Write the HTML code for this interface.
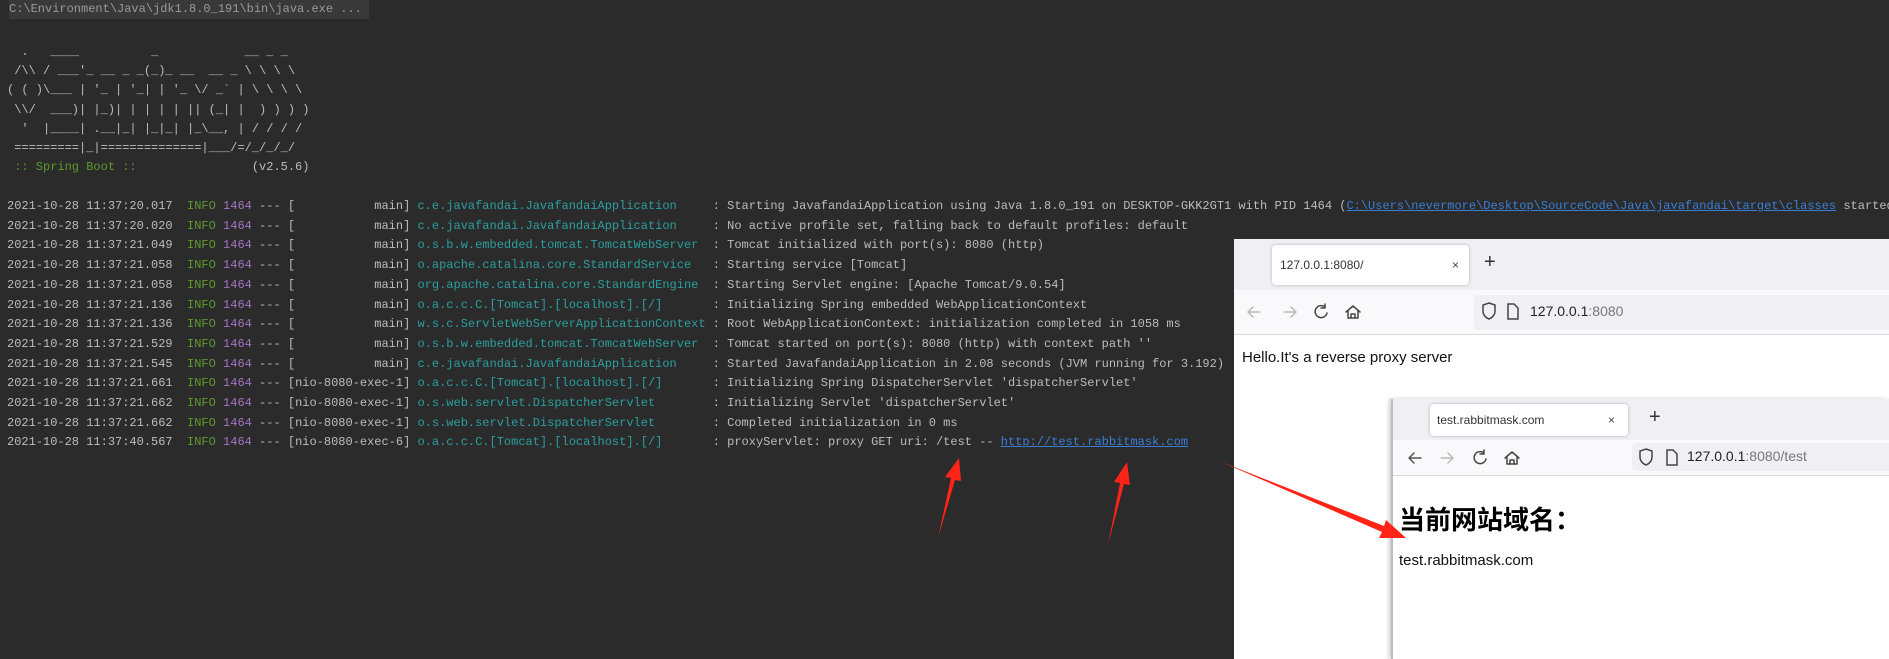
<!DOCTYPE html>
<html><head><meta charset="utf-8">
<style>
*{margin:0;padding:0;box-sizing:border-box}
body{width:1889px;height:659px;background:#2b2b2b;position:relative;overflow:hidden;font-family:"Liberation Mono",monospace;font-size:12px;color:#bcbcbc}
.hdr{position:absolute;left:9px;top:0;width:360px;height:19px;background:#393939;color:#9a9a9a;line-height:19px;white-space:nowrap;overflow:hidden}
pre{font-family:"Liberation Mono",monospace;font-size:12px;white-space:pre;position:absolute}
.ban{left:7px;top:43px;line-height:19.2px;color:#bcbcbc}
.log{left:7px;top:197px;line-height:19.7px;color:#bcbcbc}
.g{color:#5e9a2c}.p{color:#a673c4}.c{color:#2b9f9f}.sb{color:#5e9a2c}
.lk{color:#3a7fd6;text-decoration:underline}
.win{position:absolute;background:#fff;font-family:"Liberation Sans",sans-serif}
.tabbar{position:absolute;left:0;right:0;top:0;background:#f0f0f4}
.tab{position:absolute;background:#fff;border-radius:4px;box-shadow:0 0 3px rgba(0,0,0,.25);font-size:12px;color:#333}
.nav{position:absolute;left:0;right:0;background:#f9f9fb;border-bottom:1px solid #d8d8d8}
.url{position:absolute;right:0;background:#f0f0f4;border-radius:4px 0 0 4px}
.ic{position:absolute}
</style></head><body>
<div class="hdr">C:\Environment\Java\jdk1.8.0_191\bin\java.exe ...</div>
<pre class="ban">  .   ____          _            __ _ _
 /\\ / ___'_ __ _ _(_)_ __  __ _ \ \ \ \
( ( )\___ | '_ | '_| | '_ \/ _` | \ \ \ \
 \\/  ___)| |_)| | | | | || (_| |  ) ) ) )
  '  |____| .__|_| |_|_| |_\__, | / / / /
 =========|_|==============|___/=/_/_/_/
<span class="sb"> :: Spring Boot :: </span>               (v2.5.6)</pre>
<pre class="log">2021-10-28 11:37:20.017  <span class="g">INFO</span> <span class="p">1464</span> --- [           main] <span class="c">c.e.javafandai.JavafandaiApplication    </span> : Starting JavafandaiApplication using Java 1.8.0_191 on DESKTOP-GKK2GT1 with PID 1464 (<span class="lk">C:\Users\nevermore\Desktop\SourceCode\Java\javafandai\target\classes</span> started
2021-10-28 11:37:20.020  <span class="g">INFO</span> <span class="p">1464</span> --- [           main] <span class="c">c.e.javafandai.JavafandaiApplication    </span> : No active profile set, falling back to default profiles: default
2021-10-28 11:37:21.049  <span class="g">INFO</span> <span class="p">1464</span> --- [           main] <span class="c">o.s.b.w.embedded.tomcat.TomcatWebServer </span> : Tomcat initialized with port(s): 8080 (http)
2021-10-28 11:37:21.058  <span class="g">INFO</span> <span class="p">1464</span> --- [           main] <span class="c">o.apache.catalina.core.StandardService  </span> : Starting service [Tomcat]
2021-10-28 11:37:21.058  <span class="g">INFO</span> <span class="p">1464</span> --- [           main] <span class="c">org.apache.catalina.core.StandardEngine </span> : Starting Servlet engine: [Apache Tomcat/9.0.54]
2021-10-28 11:37:21.136  <span class="g">INFO</span> <span class="p">1464</span> --- [           main] <span class="c">o.a.c.c.C.[Tomcat].[localhost].[/]      </span> : Initializing Spring embedded WebApplicationContext
2021-10-28 11:37:21.136  <span class="g">INFO</span> <span class="p">1464</span> --- [           main] <span class="c">w.s.c.ServletWebServerApplicationContext</span> : Root WebApplicationContext: initialization completed in 1058 ms
2021-10-28 11:37:21.529  <span class="g">INFO</span> <span class="p">1464</span> --- [           main] <span class="c">o.s.b.w.embedded.tomcat.TomcatWebServer </span> : Tomcat started on port(s): 8080 (http) with context path ''
2021-10-28 11:37:21.545  <span class="g">INFO</span> <span class="p">1464</span> --- [           main] <span class="c">c.e.javafandai.JavafandaiApplication    </span> : Started JavafandaiApplication in 2.08 seconds (JVM running for 3.192)
2021-10-28 11:37:21.661  <span class="g">INFO</span> <span class="p">1464</span> --- [nio-8080-exec-1] <span class="c">o.a.c.c.C.[Tomcat].[localhost].[/]      </span> : Initializing Spring DispatcherServlet 'dispatcherServlet'
2021-10-28 11:37:21.662  <span class="g">INFO</span> <span class="p">1464</span> --- [nio-8080-exec-1] <span class="c">o.s.web.servlet.DispatcherServlet       </span> : Initializing Servlet 'dispatcherServlet'
2021-10-28 11:37:21.662  <span class="g">INFO</span> <span class="p">1464</span> --- [nio-8080-exec-1] <span class="c">o.s.web.servlet.DispatcherServlet       </span> : Completed initialization in 0 ms
2021-10-28 11:37:40.567  <span class="g">INFO</span> <span class="p">1464</span> --- [nio-8080-exec-6] <span class="c">o.a.c.c.C.[Tomcat].[localhost].[/]      </span> : proxyServlet: proxy GET uri: /test -- <span class="lk">http://test.rabbitmask.com</span></pre>

<!-- browser 1 -->
<div class="win" style="left:1234px;top:239px;width:655px;height:420px">
  <div class="tabbar" style="height:51px"></div>
  <div class="tab" style="left:38px;top:6px;width:197px;height:40px;line-height:40px;padding-left:8px">127.0.0.1:8080/<span style="position:absolute;left:180px;color:#444">×</span></div>
  <div style="position:absolute;left:250px;top:12px;font-size:20px;color:#333">+</div>
  <div class="nav" style="top:51px;height:45px"></div>
  <div class="url" style="left:240px;top:56px;height:35px"></div>
  <svg class="ic" style="left:0;top:51px" width="240" height="45" viewBox="0 0 240 45" fill="none" stroke-width="1.5" stroke-linecap="round" stroke-linejoin="round">
    <path d="M14 22h12M14 22l5-5M14 22l5 5" stroke="#bbb"/>
    <path d="M50 22h12M62 22l-5-5M62 22l-5 5" stroke="#bbb"/>
    <path d="M91 17a6 6 0 1 0 2 6M91 14v4h-4" stroke="#444"/>
    <path d="M112 22l7-6 7 6M114 21v7h10v-7M117 28v-4h4v4" stroke="#444"/>
  </svg>
  <svg class="ic" style="left:248px;top:62px" width="44" height="22" viewBox="0 0 44 22" fill="none" stroke="#444" stroke-width="1.5">
    <path d="M7 2l6 2v6c0 4-3 7-6 8-3-1-6-4-6-8V4z"/>
    <path d="M26 3h6l4 4v11h-10z"/>
  </svg>
  <div style="position:absolute;left:296px;top:64px;font-size:14px;color:#222">127.0.0.1<span style="color:#777">:8080</span></div>
  <div style="position:absolute;left:8px;top:110px;font-size:15px;color:#111">Hello.It's a reverse proxy server</div>
</div>

<!-- browser 2 -->
<div class="win" style="left:1391px;top:399px;width:498px;height:260px;border-left:2px solid #bdbdbd;box-shadow:-2px 0 4px rgba(0,0,0,.2)">
  <div class="tabbar" style="height:41px"></div>
  <div class="tab" style="left:37px;top:5px;width:198px;height:32px;line-height:32px;padding-left:7px">test.rabbitmask.com<span style="position:absolute;left:178px;color:#444">×</span></div>
  <div style="position:absolute;left:256px;top:7px;font-size:20px;color:#333">+</div>
  <div class="nav" style="top:41px;height:36px"></div>
  <div class="url" style="left:239px;top:44px;height:28px"></div>
  <svg class="ic" style="left:0;top:41px" width="239" height="36" viewBox="0 0 239 36" fill="none" stroke-width="1.5" stroke-linecap="round" stroke-linejoin="round">
    <path d="M16 18h12M16 18l5-5M16 18l5 5" stroke="#555"/>
    <path d="M48 18h12M60 18l-5-5M60 18l-5 5" stroke="#bbb"/>
    <path d="M91 13a6 6 0 1 0 2 6M91 10v4h-4" stroke="#444"/>
    <path d="M112 18l7-6 7 6M114 17v7h10v-7M117 24v-4h4v4" stroke="#444"/>
  </svg>
  <svg class="ic" style="left:246px;top:48px" width="44" height="22" viewBox="0 0 44 22" fill="none" stroke="#444" stroke-width="1.5">
    <path d="M7 2l6 2v6c0 4-3 7-6 8-3-1-6-4-6-8V4z"/>
    <path d="M28 3h6l4 4v11h-10z"/>
  </svg>
  <div style="position:absolute;left:294px;top:49px;font-size:14px;color:#222">127.0.0.1<span style="color:#777">:8080/test</span></div>
  <div style="position:absolute;left:6px;top:101px;font-size:26px;font-weight:bold;color:#000;font-family:'Liberation Sans','Noto Sans CJK SC',sans-serif">当前网站域名：</div>
  <div style="position:absolute;left:6px;top:153px;font-size:15px;color:#111">test.rabbitmask.com</div>
</div>

<!-- arrows -->
<svg style="position:absolute;left:0;top:0" width="1889" height="659">
  <g fill="#ff2318">
    <polygon points="938,538 951,478 945,477 959,458 961,481 955,480"/>
    <polygon points="1108,545 1120,483 1114,482 1127,462 1130,485 1124,484"/>
    <polygon points="1219,461 1384,526 1386,520 1406,538 1379,538 1382,532"/>
  </g>
</svg>
</body></html>
